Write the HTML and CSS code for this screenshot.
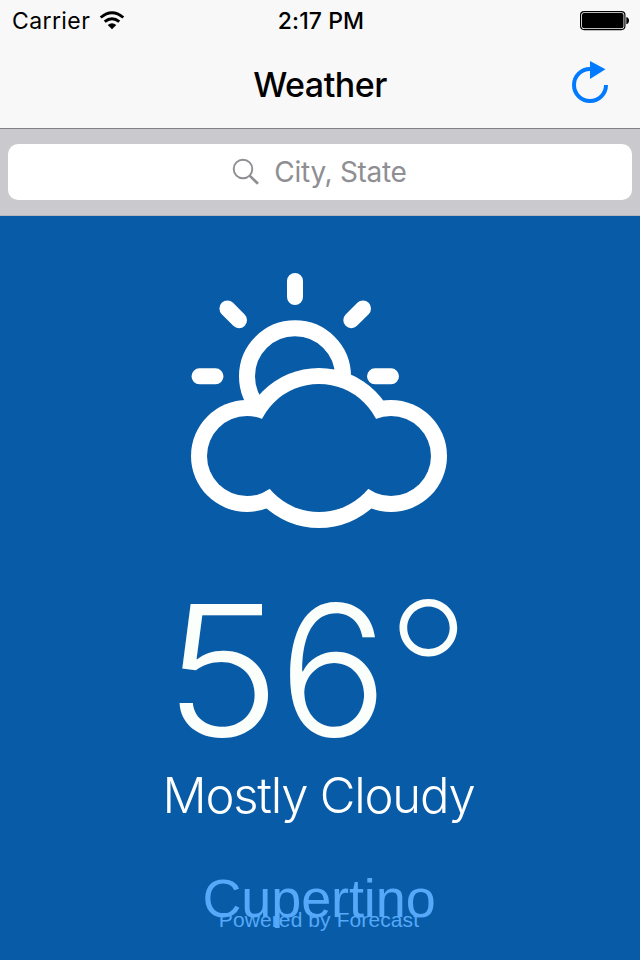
FILE: index.html
```html
<!DOCTYPE html>
<html lang="en">
<head>
<meta charset="utf-8">
<title>Weather</title>
<link rel="stylesheet" href="styles.css">
</head>
<body>
<header class="top">
  <div class="status">
    <div class="carrier"><span class="carrier-name">Carrier</span>
      <svg class="wifi" width="26" height="19" viewBox="0 0 26 19"><g fill="none" stroke="#000" stroke-width="2.9"><path d="M1.7 6.5Q13 -3.1 24.3 6.5"/><path d="M5.7 10.6Q13 4.7 20.3 10.6"/></g><path d="M8.7 14Q13 10.4 17.3 14L13 18.2Z"/></svg>
    </div>
    <time class="clock">2:17 PM</time>
    <svg class="battery" width="50" height="20" viewBox="0 0 50 20"><rect x=".6" y=".6" width="44.3" height="18" rx="3.5" fill="#fff" stroke="#000" stroke-width="1.2"/><rect x="2" y="2" width="41.5" height="15.2" rx="2"/><path d="M46.3 6Q49 6.6 49 9.6T46.3 13.2Z"/></svg>
  </div>
  <div class="nav">
    <h1 class="title">Weather</h1>
    <svg class="refresh" width="40" height="46" viewBox="0 0 40 46"><path d="M20 10A16 16 0 1 0 36 26" fill="none" stroke="#007aff" stroke-width="4"/><path d="M20 2L35.5 10.3L20 20Z" fill="#007aff"/></svg>
  </div>
</header>
<div class="search">
  <div class="field">
    <svg class="glass" width="28" height="28" viewBox="0 0 28 28" fill="none" stroke="#8e8e93"><circle cx="11" cy="11" r="9.3" stroke-width="1.9"/><path d="M17.6 17.6L26 25.8" stroke-width="2.7"/></svg>
    <span class="placeholder">City, State</span>
  </div>
</div>
<main class="weather">
  <svg class="condition-icon" width="256" height="256" viewBox="191 272 256 256">
    <g fill="none" stroke="#fff" stroke-width="16" stroke-linecap="round"><path d="M295 281V297M227.4 308.5L239 320.2M363 308.5L351.3 320.2M199.5 376.3H215.5M375 376.3H391"/><circle cx="295" cy="376.3" r="48"/></g>
    <g fill="#fff"><circle cx="247" cy="456" r="56"/><circle cx="319" cy="448" r="80"/><circle cx="391" cy="456" r="56"/></g>
    <g fill="#085ba7"><circle cx="247" cy="456" r="40"/><circle cx="319" cy="448" r="64"/><circle cx="391" cy="456" r="40"/></g>
  </svg>
  <div class="temperature"><span class="tens">5</span>6<span class="degree">°</span></div>
  <div class="summary">Mostly Cloudy</div>
  <div class="city">Cupertino</div>
  <div class="credit">Powered by Forecast</div>
</main>
</body>
</html>
```
FILE: styles.css
```css
* { box-sizing: border-box; }
body {
  margin: 0;
  width: 640px;
  height: 960px;
  overflow: hidden;
  display: flex;
  flex-direction: column;
  background: #085ba7;
  font-family: Inter, "Liberation Sans", sans-serif;
  white-space: nowrap;
}
.top { height: 129px; background: #f8f8f8; border-bottom: 1px solid #828286; }
.status {
  height: 42px;
  padding: 0 10px 0 12px;
  display: grid;
  grid-template-columns: 1fr auto 1fr;
  align-items: center;
}
.carrier { display: flex; align-items: center; gap: 9px; }
.wifi { margin-bottom: 2px; }
.carrier-name { font-size: 23px; line-height: 42px; letter-spacing: .4px; }
.clock { font-size: 23px; line-height: 42px; font-weight: 550; letter-spacing: .1px; }
.battery { justify-self: end; }
.nav {
  height: 86px;
  padding: 0 30px;
  display: grid;
  grid-template-columns: 1fr auto 1fr;
  align-items: center;
}
.title { grid-column: 2; margin: 0; font-size: 34px; line-height: 84px; font-weight: 550; letter-spacing: -.5px; }
.refresh { justify-self: end; margin-top: -6px; }
.search { height: 87px; padding: 15px 8px 16px; background: #c9c9ce; border-bottom: 1px solid #b5b7bd; }
.field {
  height: 56px;
  border-radius: 10px;
  background: #fff;
  display: flex;
  align-items: center;
  justify-content: center;
  gap: 14px;
  padding-right: 1px;
}
.placeholder { font-size: 28px; line-height: 56px; color: #8e8e93; letter-spacing: -.3px; }
.weather {
  flex: 1;
  display: flex;
  flex-direction: column;
  align-items: center;
  padding-top: 56px;
}
.condition-icon { display: block; flex: none; margin-right: 2px; }
.temperature {
  height: 208px;
  margin: 38px 9px 0 0;
  font-size: 182px;
  line-height: 208px;
  font-weight: 350;
  color: #fbfffc;
  letter-spacing: -5px;
}
.tens { display: inline-block; transform: translateX(-2px) scaleX(1.08); margin-right: 5px; }
.degree { display: inline-block; font-weight: 210; transform: translate(4px, -1px) scale(1.03); }
.summary {
  height: 60px;
  margin: -8px 3px 0 0;
  font-size: 49px;
  line-height: 60px;
  font-weight: 330;
  letter-spacing: -1.2px;
  color: #fff;
}
.city {
  margin: 40px 2px 0 0;
  height: 64px;
  font: 54px/64px "Liberation Sans", sans-serif;
  letter-spacing: -.1px;
  color: #55a9f8;
}
.credit {
  margin: -23px 2px 0 0;
  height: 26px;
  font: 21px/26px "Liberation Sans", sans-serif;
  letter-spacing: .1px;
  color: #55a9f8;
}
```
